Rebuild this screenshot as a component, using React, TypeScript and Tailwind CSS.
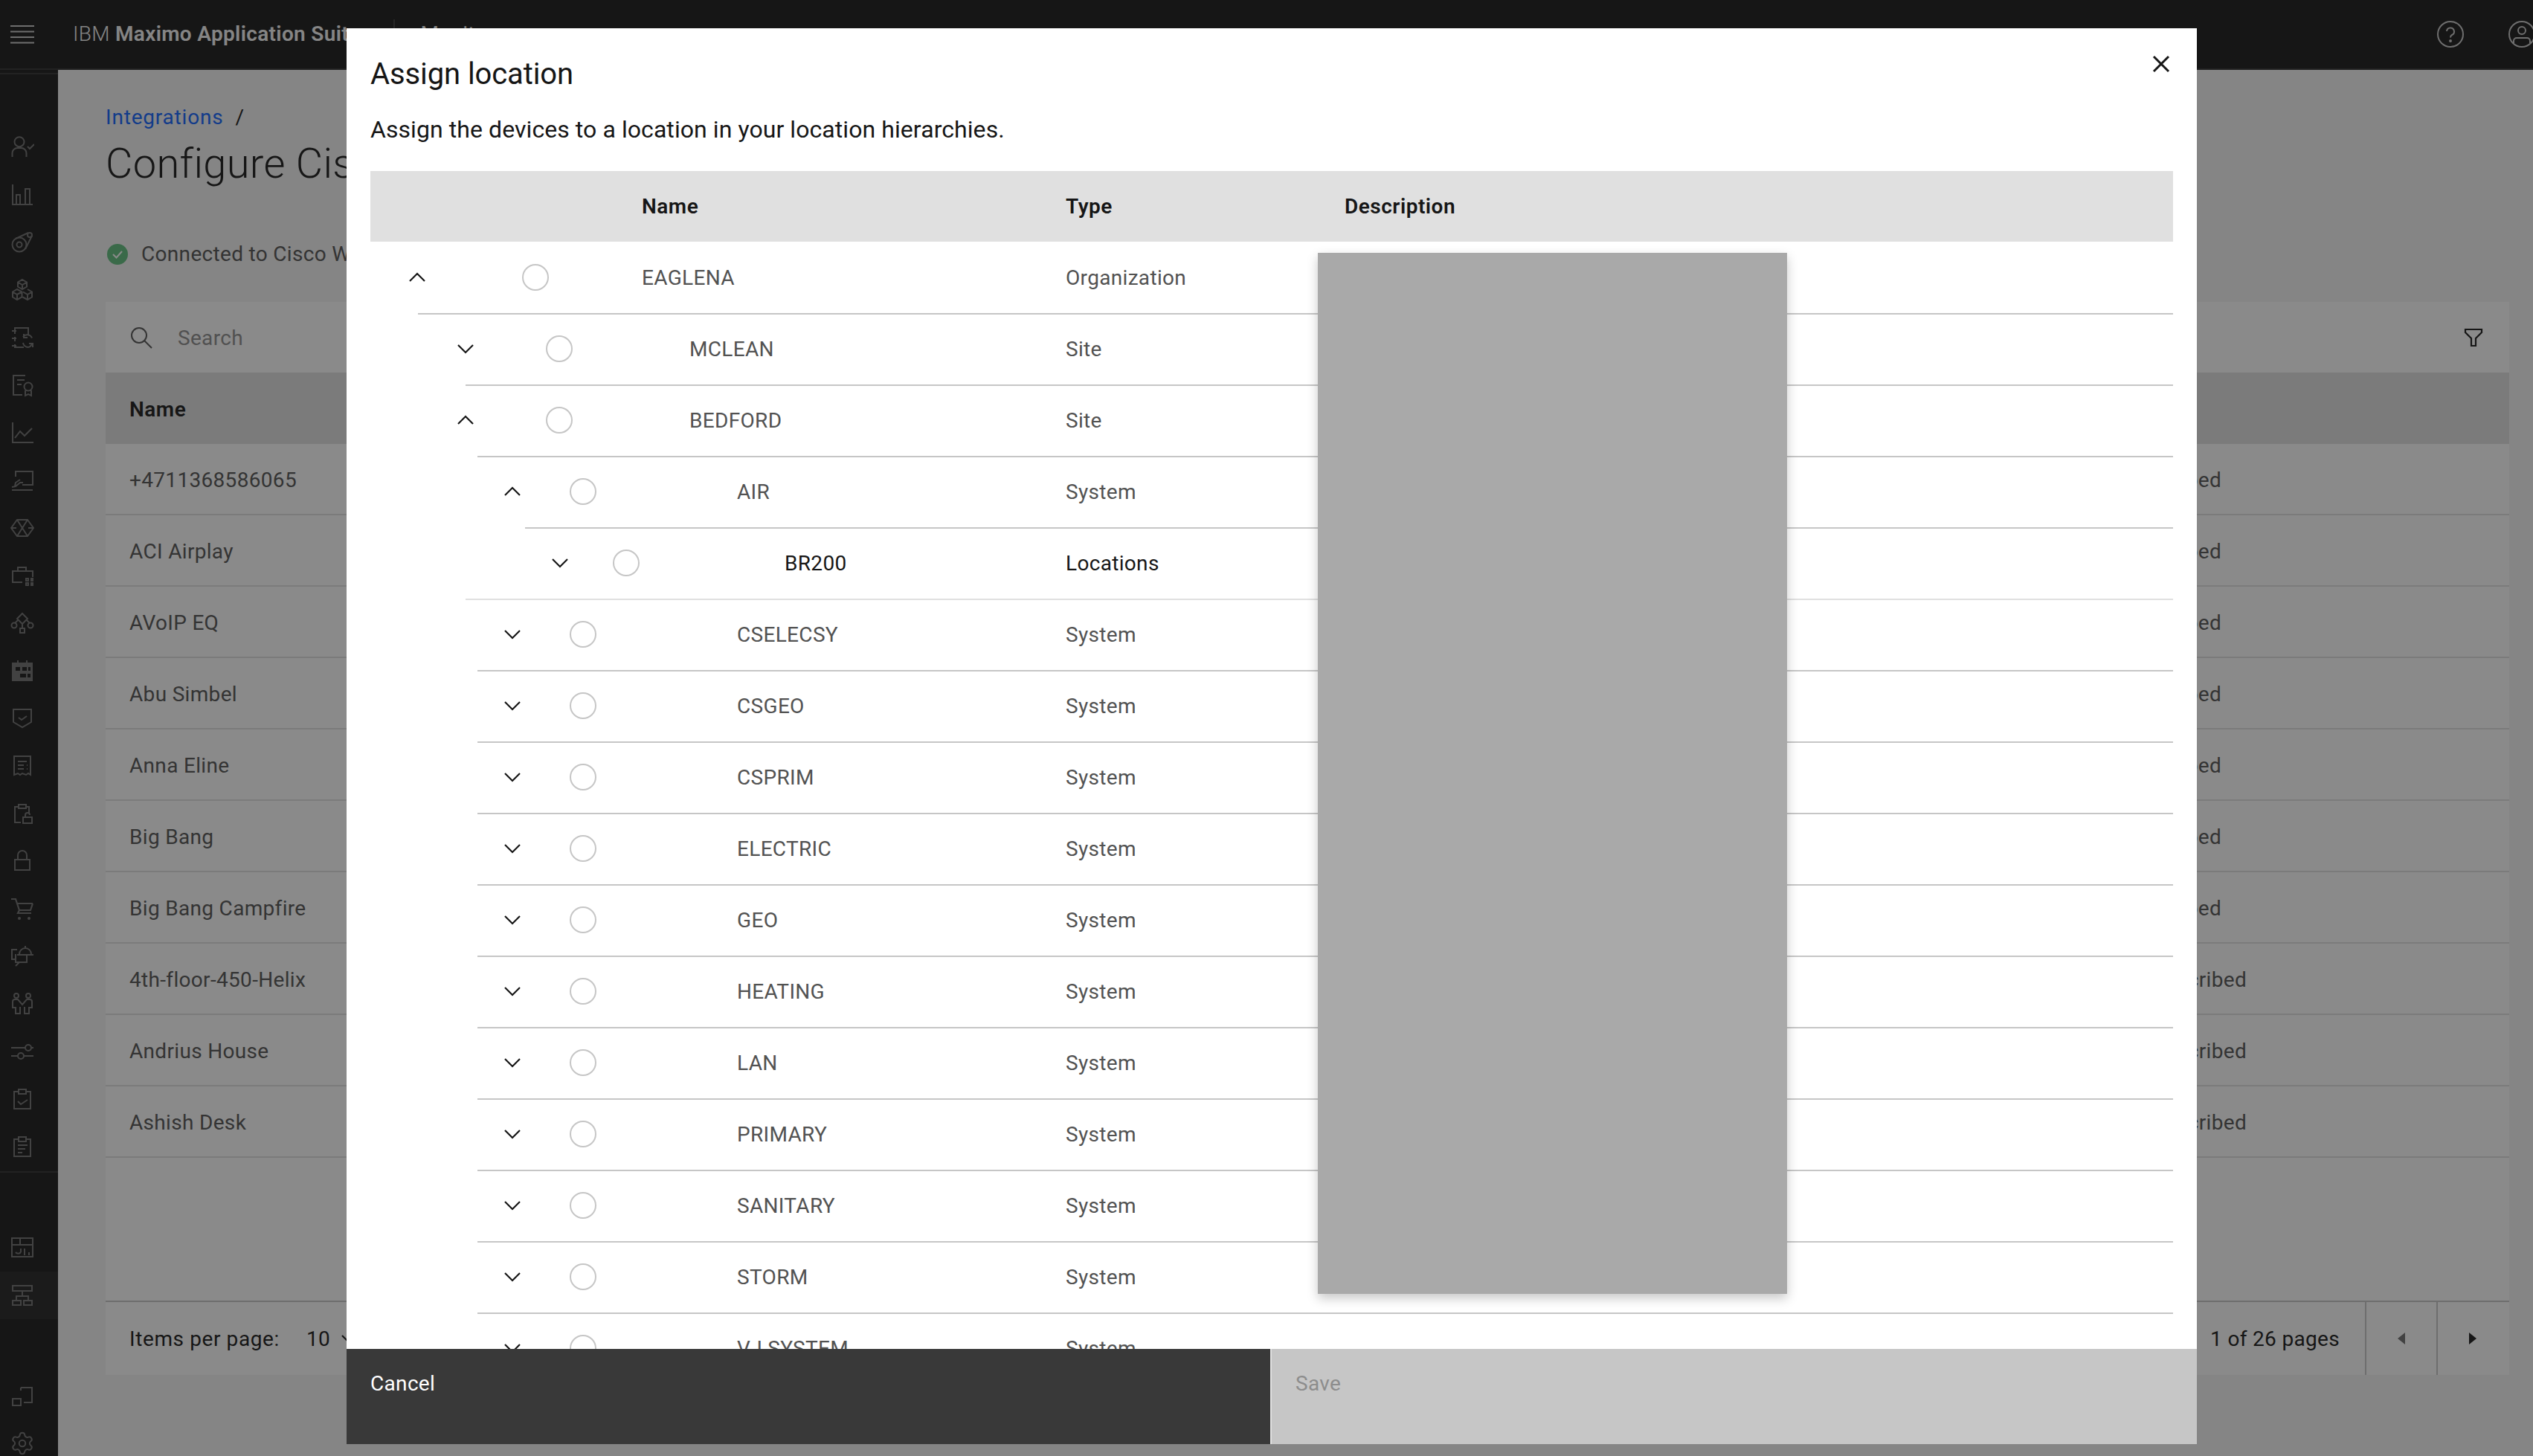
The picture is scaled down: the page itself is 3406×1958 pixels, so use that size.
import React from "react";
import { Settings } from "lucide-react";

const I = ({ children, className = "" }: { children: React.ReactNode; className?: string }) => (
  <svg width="32" height="32" viewBox="0 0 32 32" fill="none" stroke="currentColor" strokeWidth="2" className={className}>
    {children}
  </svg>
);

const navTop: React.ReactNode[] = [
  <><circle cx="12" cy="8.700" r="6.500" /><path d="M2.500 29v-5a7 7 0 0 1 7-7h5a7 7 0 0 1 7 7v5M23 15l3 3 6-6" /></>,
  <path d="M3 2v27h27M8 29V16h5v13M20 29V8h6v21" />,
  <><circle cx="12" cy="19" r="9.500" /><circle cx="12" cy="19" r="3.500" /><circle cx="26" cy="6" r="3" /><path d="M7 11 24 3M20 25 29 7" /></>,
  <path d="M16 2l6 3.500v6L16 15l-6-3.500v-6zM10 5.500l6 3.500 6-3.500M16 9v6M9 15l6.500 3.500v7L9 29l-6-3.500v-7zM3 18.500l6 3.500 6.500-3.500M9 22v7M23 15l6 3.500v7L23 29l-6.500-3.500M17 18.500l6 3.500 6-3.500M23 22v7" />,
  <path d="M6 5V3h18v10M6 5v6M6 15v6M6 25v4h12M2 7h6M2 17h6M2 27h6M24 29a7 7 0 0 1-7-6M17 15a7 7 0 0 1 12 1.500M18 11v5h5M30 29v-5h-5M29 24a7 7 0 0 1-5 5" />,
  <path d="M20 3H4v26h12M9 9h10M9 15h6M24 12.500a5.500 5.500 0 1 1 0 11 5.500 5.500 0 0 1 0-11zM20 23v7l4-2 4 2v-7" />,
  <path d="M3 2v27h28M6 23l7-9 6 6 10-10" />,
  <path d="M7 11V4h23v18H16M2 29h28M2 25l5-1 6-5h4M13 15l-6 4-1 5" />,
  <path d="M9 5h14l8 11-8 11H9L1 16zM9 5l14 22M23 5 9 27M1 16h7M24 16h7" />,
  <path d="M16 25H3V10h27v8M10 10V5h11v5M21 20h3v3h-3zM28 20h2v3h-2zM21 26h3v3h-3zM28 26h2v3h-2z" />,
  <><path d="M16 3l7 7-7 7-7-7zM16 17v6M13 23h6v6h-6zM10 12l-4 4M22 12l4 4" /><circle cx="5" cy="19" r="3.500" /><circle cx="27" cy="19" r="3.500" /></>,
  <><path d="M3 6h26v23H3z" fill="currentColor" /><path d="M10 2v4M22 2v4" /><path d="M7 11h6v5H7zM16 11h6v5h-6zM24 11h3v5h-3zM13 20h8v5h-8zM23 20h4v5h-4z" fill="#161616" stroke="none" /></>,
  <path d="M4 4h24v17l-12 7-12-7zM11 15l4 3 7-5" />,
  <path d="M5 3h22v25l-3-2-3 2-5-2-3 2-3-2-5 2zM10 10h12M10 15h8M10 20h8M22 15h1M22 20h1" />,
  <path d="M14 28H6V7h5M21 7h4v8M11 4h10v5H11zM17 21h12v8H17zM20 21v-3a3 3 0 0 1 6 0" />,
  <path d="M6 14h20v14H6zM10 14V8a6 6 0 0 1 12 0v6" />,
  <><path d="M1 3h6l5 15h15l3-9M8 9h22M12 18l-2 4h18" strokeWidth="2.200" /><circle cx="12" cy="29" r="1" /><circle cx="25" cy="29" r="1" /></>,
  <path d="M9 7H2v13h5M7 13v11h5l-5 5M12 24h10v-9M12 13a8 8 0 0 1 16 0M9 14h22M20 5V2" />,
  <><circle cx="8" cy="5" r="3" /><circle cx="24" cy="5" r="3" /><path d="M3 13a3 3 0 0 1 3-3h4l6 7 6-7h4a3 3 0 0 1 3 3v8h-4v8h-6v-9M3 13v8h4v8h6v-9" /></>,
  <><path d="M1 11h19M28 11h3M1 22h9M18 22h13" /><circle cx="24" cy="11" r="4" /><circle cx="14" cy="22" r="4" /></>,
  <path d="M11 6H5v23h22V6h-6M11 3h10v6H11zM10 19l4 4 9-6" />,
  <path d="M11 6H5v23h22V6h-6M11 3h10v6H11zM10 14h13M10 19h10M10 24h6" />,
];

const Nav = ({ children, active = false }: { children: React.ReactNode; active?: boolean }) => (
  <div className={`h-[64px] shrink-0 flex items-center pl-[14px] ${active ? "bg-[#212121]" : ""}`}>
    <I className="text-[#6e6e6e]">{children}</I>
  </div>
);

const names = ["+4711368586065", "ACI Airplay", "AVoIP EQ", "Abu Simbel", "Anna Eline", "Big Bang", "Big Bang Campfire", "4th-floor-450-Helix", "Andrius House", "Ashish Desk"];

type Row = { name: string; type: string; level: 0 | 1 | 2 | 3; open?: boolean; line: string; selected?: boolean };
const rows: Row[] = [
  { name: "EAGLENA", type: "Organization", level: 0, open: true, line: "ml-[64px] bg-[#c6c6c6]" },
  { name: "MCLEAN", type: "Site", level: 1, line: "ml-[128px] bg-[#c6c6c6]" },
  { name: "BEDFORD", type: "Site", level: 1, open: true, line: "ml-[144px] bg-[#c6c6c6]" },
  { name: "AIR", type: "System", level: 2, open: true, line: "ml-[208px] bg-[#c6c6c6]" },
  { name: "BR200", type: "Locations", level: 3, selected: true, line: "ml-[128px] bg-[#e0e0e0]" },
  ...["CSELECSY", "CSGEO", "CSPRIM", "ELECTRIC", "GEO", "HEATING", "LAN", "PRIMARY", "SANITARY", "STORM", "VJ SYSTEM"].map(
    (name) => ({ name, type: "System", level: 2 as const, line: "ml-[144px] bg-[#c6c6c6]" })
  ),
];

const levels = {
  0: { pad: "pl-[47px]", chev: "mr-[125px]", name: "ml-[125px] w-[570px]" },
  1: { pad: "pl-[112px]", chev: "mr-[92px]", name: "ml-[157px] w-[506px]" },
  2: { pad: "pl-[175px]", chev: "mr-[61px]", name: "ml-[189px] w-[442px]" },
  3: { pad: "pl-[239px]", chev: "mr-[55px]", name: "ml-[195px] w-[378px]" },
};

function TreeRow({ r }: { r: Row }) {
  const l = levels[r.level];
  return (
    <div>
      <div className={`h-[94px] flex items-center ${l.pad} ${r.selected ? "text-[#161616]" : "text-[#525252]"}`}>
        <svg width="32" height="32" viewBox="0 0 32 32" fill="none" stroke="#161616" strokeWidth="2.200" className={`shrink-0 ${l.chev} -mt-[2px]`}>
          <path d={r.open ? "M6 21 16 11l10 10" : "M6 11l10 10 10-10"} />
        </svg>
        <div className="w-[36px] h-[36px] rounded-full border-2 border-[#c6c6c6] shrink-0 -mt-[2px]" />
        <div className={`${l.name} shrink-0`}>{r.name}</div>
        <div>{r.type}</div>
      </div>
      <div className={`h-[2px] ${r.line}`} />
    </div>
  );
}

export default function App() {
  return (
    <div className="relative w-[3406px] h-[1958px] overflow-hidden bg-[#f4f4f4] font-['Roboto',sans-serif] text-[28px] leading-[36px] tracking-[0.32px] text-[#161616]">
      <header className="h-[94px] bg-[#161616] border-b-2 border-[#2e2e2e] flex items-center text-[#f4f4f4]">
        <svg width="32" height="32" viewBox="0 0 32 32" stroke="currentColor" strokeWidth="2" className="ml-[14px] mr-[52px] text-[#c6c6c6]">
          <path d="M0 5h32M0 12.500h32M0 20h32M0 27.500h32" />
        </svg>
        <div className="font-light whitespace-nowrap">IBM <span className="font-semibold">Maximo Application Suite</span></div>
        <div className="ml-[45px] w-[2px] h-[40px] bg-[#393939]" />
        <div className="ml-[34px]">Monitor</div>
        <div className="ml-auto flex items-center gap-[60px] -mr-[2px]">
          <svg width="36" height="36" viewBox="0 0 36 36" fill="none" stroke="#c6c6c6" strokeWidth="2">
            <circle cx="18" cy="18" r="17" /><path d="M13 14a5 5 0 1 1 7 5c-1.500.8-2 1.600-2 3.500" /><circle cx="18" cy="27" r="1" fill="#c6c6c6" />
          </svg>
          <svg width="36" height="36" viewBox="0 0 36 36" fill="none" stroke="#c6c6c6" strokeWidth="2" className="-mr-[1px]">
            <circle cx="18" cy="18" r="17" /><circle cx="18" cy="13" r="5" /><path d="M7 30v-3a4 4 0 0 1 4-4h14a4 4 0 0 1 4 4v3" />
          </svg>
        </div>
      </header>
      <div className="flex h-[1864px]">
        <nav className="w-[78px] shrink-0 bg-[#161616] flex flex-col overflow-hidden">
          <div className="h-[6px] shrink-0 border-b-2 border-[#2e2e2e] mb-[66px]" />
          {navTop.map((n, i) => <Nav key={i}>{n}</Nav>)}
          <div className="h-[2px] shrink-0 bg-[#2e2e2e] mt-[1px]" />
          <div className="mt-[69px]" />
          <Nav><path d="M2 3h28v25H2zM2 12h28M13 3v9M7 22a4.500 4.500 0 0 0 7 0M14 17v5M19 17v9M25 22v4" /></Nav>
          <Nav active><path d="M3 3h26v7H3zM16 10v7M8 23v-6h16v6M3 23h11v6H3zM18 23h11v6H18z" /></Nav>
          <div className="mt-[71px]" />
          <Nav><path d="M14 5h15v20H18M3 20h11v9H3zM14 5v4" /></Nav>
          <div className="h-[64px] shrink-0 pl-[13px] flex items-center text-[#6e6e6e]"><Settings size={34} strokeWidth={1.4} /></div>
        </nav>
        <main className="flex-1 pl-[64px] pr-[32px] min-w-0">
          <div className="pt-[46px] flex items-center h-[82px]">
            <span className="text-[#0f62fe] tracking-[0.8px]">Integrations</span><span className="ml-[16px]">/</span>
          </div>
          <h1 className="text-[56px] leading-[72px] mt-[8px] font-light whitespace-nowrap">Configure Cisco Webex</h1>
          <div className="flex items-center h-[36px] mt-[68px] text-[#525252]">
            <svg width="28" height="28" viewBox="0 0 28 28" className="ml-[2px] mr-[18px]">
              <circle cx="14" cy="14" r="14" fill="#5fbf7d" /><path d="M8 14l4.500 4.500L20 10" stroke="#fff" strokeWidth="2" fill="none" />
            </svg>
            Connected to Cisco Webex
          </div>
          <div className="mt-[46px] bg-white">
            <div className="h-[95px] flex items-center">
              <svg width="32" height="32" viewBox="0 0 32 32" fill="none" stroke="#525252" strokeWidth="2" className="ml-[32px]">
                <circle cx="13" cy="13" r="10" /><path d="M20 20l10 10" />
              </svg>
              <span className="ml-[33px] pt-[2px] text-[#8d8d8d]">Search</span>
              <svg width="32" height="32" viewBox="0 0 32 32" fill="none" stroke="#161616" strokeWidth="2.200" className="ml-auto mr-[32px]">
                <path d="M5 5h22v4l-8 8v10h-6V17L5 9z" />
              </svg>
            </div>
            <div className="h-[96px] bg-[#e0e0e0] flex items-center pl-[32px] pt-[3px] font-semibold tracking-[0.5px]">Name</div>
            {names.map((n, i) => (
              <div key={n} className="h-[96px] border-b-2 border-[#e0e0e0] flex items-center pl-[32px] pr-[32px] pt-[3px] text-[#525252]">
                <span>{n}</span>
                <span className={`ml-auto ${i < 7 ? "mr-[355px]" : "mr-[321px]"}`}>{i < 7 ? "Subscribed" : "Unsubscribed"}</span>
              </div>
            ))}
            <div className="h-[194px] border-b-2 border-[#c6c6c6]" />
            <div className="h-[98px] flex items-center pl-[32px]">
              <span className="tracking-[0.6px] pt-[2px]">Items per page:</span>
              <span className="ml-[36px] pt-[2px]">10</span>
              <svg width="20" height="12" viewBox="0 0 20 12" fill="none" stroke="#161616" strokeWidth="2.200" className="ml-[13px]"><path d="M3 2l7 7 7-7" /></svg>
              <span className="ml-auto mr-[34px] pt-[2px]">1 of 26 pages</span>
              <div className="w-[96px] h-full border-l-2 border-[#c6c6c6] flex items-center justify-center">
                <svg width="10" height="16" viewBox="0 0 10 16" fill="#6f6f6f"><path d="M10 0v16L0 8z" /></svg>
              </div>
              <div className="w-[96px] h-full border-l-2 border-[#c6c6c6] flex items-center justify-center mr-[2px]">
                <svg width="10" height="16" viewBox="0 0 10 16" fill="#161616"><path d="M0 0v16l10-8z" /></svg>
              </div>
            </div>
          </div>
        </main>
      </div>

      <div className="absolute inset-0 bg-[#16161680]" />

      <div className="absolute left-[466px] top-[38px] w-[2488px] h-[1904px] bg-white flex flex-col">
        <div className="relative px-[32px] shrink-0 h-[192px]">
          <div className="text-[40px] leading-[52px] pt-[36px] tracking-[-0.1px]">Assign location</div>
          <div className="text-[32px] leading-[44px] mt-[26px] whitespace-nowrap tracking-[0.07px]">Assign the devices to a location in your location hierarchies.</div>
          <svg width="32" height="32" viewBox="0 0 32 32" stroke="#161616" strokeWidth="3" className="absolute right-[32px] top-[32px]">
            <path d="M6 6l20 20M26 6 6 26" />
          </svg>
        </div>
        <div className="relative flex-1 min-h-0 mx-[32px] overflow-hidden">
          <div className="h-[95px] bg-[#e0e0e0] flex items-center font-semibold mb-[2px] tracking-[0.5px]">
            <div className="ml-[365px] w-[570px]">Name</div>
            <div className="w-[375px]">Type</div>
            <div>Description</div>
          </div>
          {rows.map((r) => <TreeRow key={r.name} r={r} />)}
          <div className="absolute left-[1274px] top-[110px] w-[631px] h-[1400px] bg-[#a9a9a9] shadow-[0_6px_14px_rgba(0,0,0,0.22)]" />
        </div>
        <div className="h-[128px] shrink-0 flex">
          <div className="w-[1242px] bg-[#393939] text-white pl-[32px] pt-[29px]">Cancel</div>
          <div className="w-[2px] bg-[#e0e0e0]" />
          <div className="flex-1 bg-[#c6c6c6] text-[#8d8d8d] pl-[32px] pt-[29px]">Save</div>
        </div>
      </div>
    </div>
  );
}
